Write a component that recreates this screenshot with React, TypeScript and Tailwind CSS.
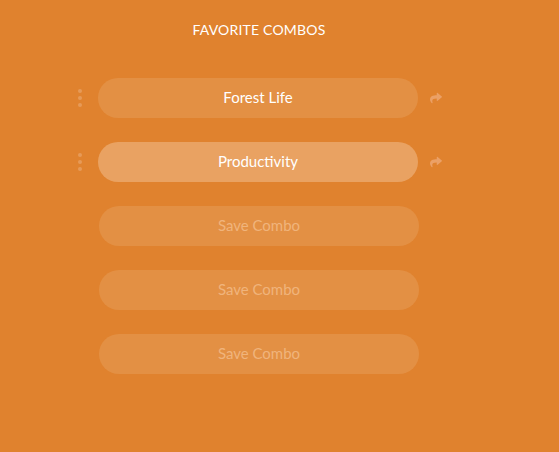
import { FaShare } from 'react-icons/fa'

const combos = [
  { name: 'Forest Life', active: false },
  { name: 'Productivity', active: true },
]

function Dots() {
  return (
    <div className="flex w-[27px] flex-col items-center gap-[3px] pr-[10px]">
      <span className="h-[4px] w-[4px] rounded-full bg-[#e69a58]" />
      <span className="h-[4px] w-[4px] rounded-full bg-[#e69a58]" />
      <span className="h-[4px] w-[4px] rounded-full bg-[#e69a58]" />
    </div>
  )
}

export default function App() {
  return (
    <div
      className="min-h-[452px] w-full bg-[#e0822e]"
      style={{ fontFamily: 'Lato, "Open Sans", sans-serif' }}
    >
      <div className="flex w-[518px] flex-col items-center pt-[21px]">
        <h1 className="text-[14px] leading-[18px] tracking-[0.2px] text-white">FAVORITE COMBOS</h1>

        <div className="mt-[39px] flex flex-col gap-[24px]">
          {combos.map(c => (
            <div key={c.name} className="flex items-center">
              <Dots />
              <div
                className={`flex h-[40px] w-[320px] items-center justify-center rounded-full pb-[2px] text-[15px] text-white ${
                  c.active ? 'bg-[#e9a262]' : 'bg-[#e39044]'
                }`}
              >
                {c.name}
              </div>
              <div className="flex w-[29px] justify-end pr-[5px]">
                <FaShare className="text-[#eba066]" size={12} />
              </div>
            </div>
          ))}

          {[0, 1, 2].map(i => (
            <div key={i} className="flex items-center pl-[28px] pr-[28px]">
              <div className="flex h-[40px] w-[320px] items-center justify-center rounded-full bg-[#e39044] pb-[2px] text-[15px] text-[#f0b47c]">
                Save Combo
              </div>
            </div>
          ))}
        </div>
      </div>
    </div>
  )
}
